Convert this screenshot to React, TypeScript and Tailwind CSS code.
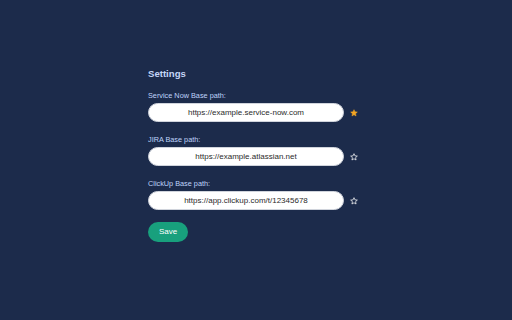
import { useState } from "react";

const fields = [
  { key: "servicenow", label: "Service Now Base path:", value: "https://example.service-now.com" },
  { key: "jira", label: "JIRA Base path:", value: "https://example.atlassian.net" },
  { key: "clickup", label: "ClickUp Base path:", value: "https://app.clickup.com/t/12345678" },
];

function StarIcon({ filled }: { filled: boolean }) {
  return (
    <svg viewBox="0 0 24 24" className="h-[8px] w-[8px]">
      <polygon
        points="12,2 14.9,8.6 22,9.3 16.6,14 18.2,21 12,17.3 5.8,21 7.4,14 2,9.3 9.1,8.6"
        fill={filled ? "#f5a623" : "none"}
        stroke={filled ? "#f5a623" : "#ffffff"}
        strokeWidth={filled ? 1.5 : 2.2}
        strokeLinejoin="round"
      />
    </svg>
  );
}

export default function App() {
  const [values, setValues] = useState<Record<string, string>>(
    Object.fromEntries(fields.map((f) => [f.key, f.value]))
  );
  const [favorite, setFavorite] = useState("servicenow");

  return (
    <div className="h-screen w-full bg-[#1c2b4b] pl-[148px] pt-[68px] font-['Liberation_Sans',Arial,sans-serif]">
      <h1 className="text-[9.6px] leading-[12px] font-bold text-[#c5d6f8]">Settings</h1>

      <div className="mt-[11px] flex flex-col gap-[13px]">
        {fields.map((f) => (
          <div key={f.key} className="flex flex-col gap-[3px]">
            <label className="text-[7.3px] leading-[9px] text-[#bfd3fa]">{f.label}</label>
            <div className="flex items-center gap-[6px]">
              <input
                value={values[f.key]}
                onChange={(e) => setValues({ ...values, [f.key]: e.target.value })}
                className="h-[19px] w-[196px] rounded-full border border-[#d0d4dc] bg-white text-center text-[8px] text-[#2b2b2b] outline-none"
              />
              <button onClick={() => setFavorite(f.key)} className="flex items-center">
                <StarIcon filled={favorite === f.key} />
              </button>
            </div>
          </div>
        ))}
      </div>

      <button className="mt-[12px] h-[20px] w-[40px] rounded-full bg-[#18a07d] text-[8px] text-white">
        Save
      </button>
    </div>
  );
}
